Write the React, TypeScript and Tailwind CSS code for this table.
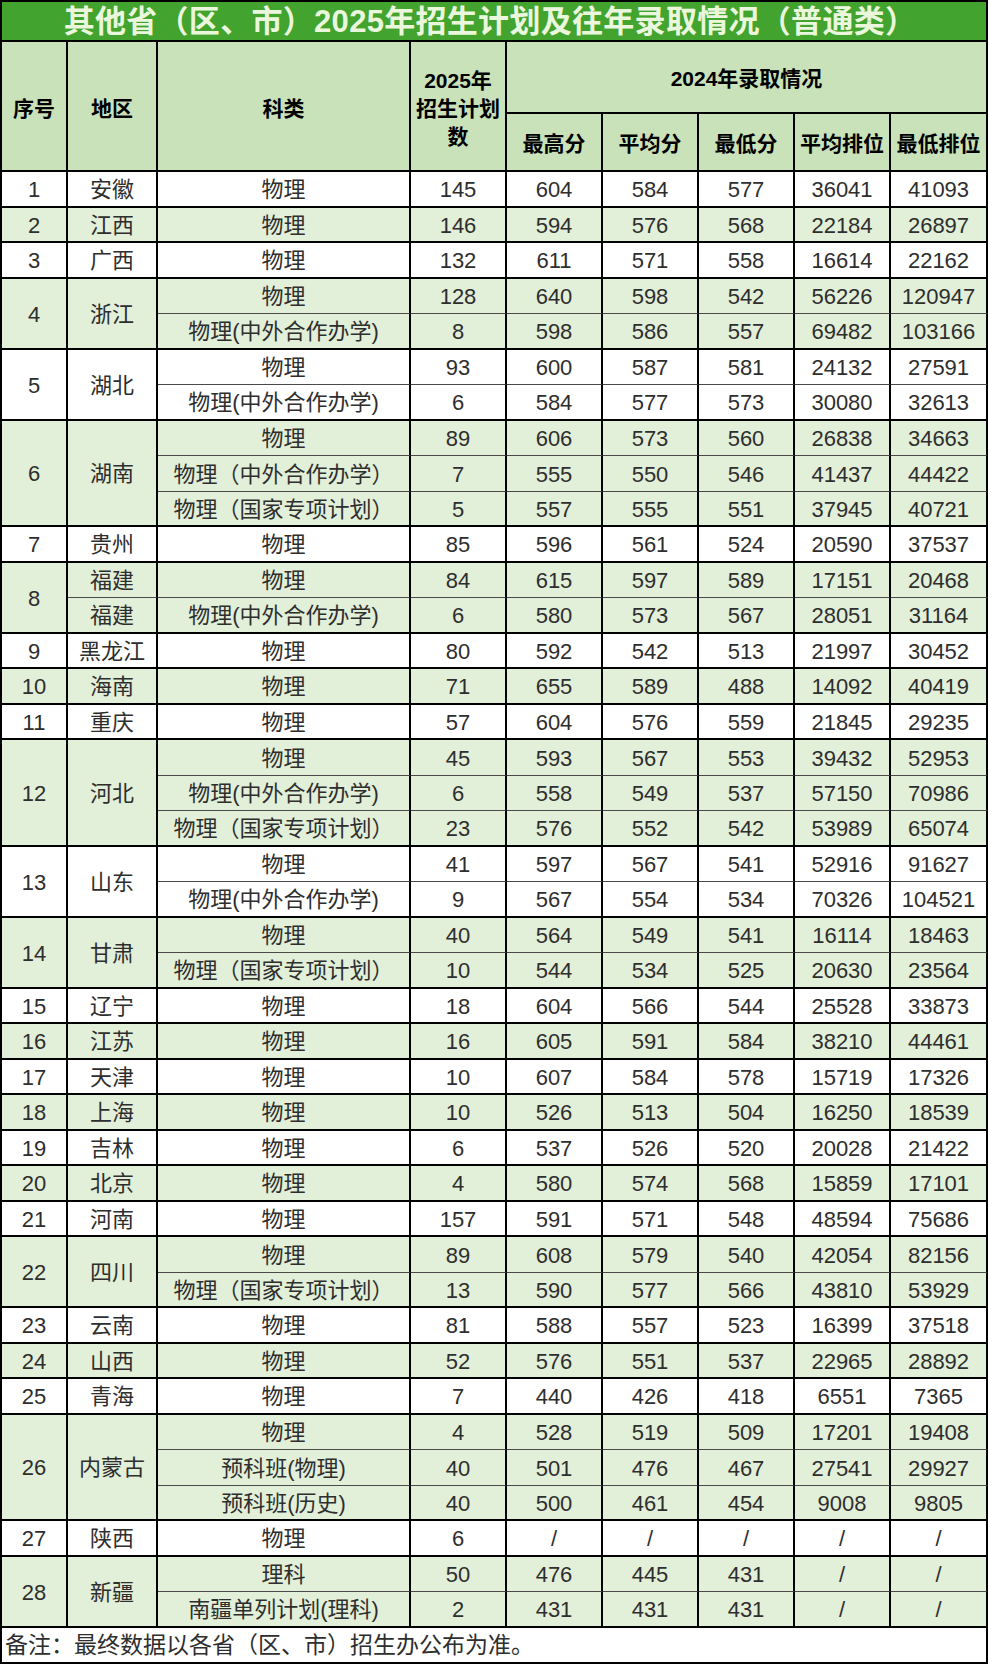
import React from "react";

type Row = [string, string, string, string, string, string, string];
type Group = { seq: string; region: string; splitRegion?: boolean; rows: Row[] };

const groups: Group[] = [
  { seq: "1", region: "安徽", rows: [["物理", "145", "604", "584", "577", "36041", "41093"]] },
  { seq: "2", region: "江西", rows: [["物理", "146", "594", "576", "568", "22184", "26897"]] },
  { seq: "3", region: "广西", rows: [["物理", "132", "611", "571", "558", "16614", "22162"]] },
  {
    seq: "4",
    region: "浙江",
    rows: [
      ["物理", "128", "640", "598", "542", "56226", "120947"],
      ["物理(中外合作办学)", "8", "598", "586", "557", "69482", "103166"],
    ],
  },
  {
    seq: "5",
    region: "湖北",
    rows: [
      ["物理", "93", "600", "587", "581", "24132", "27591"],
      ["物理(中外合作办学)", "6", "584", "577", "573", "30080", "32613"],
    ],
  },
  {
    seq: "6",
    region: "湖南",
    rows: [
      ["物理", "89", "606", "573", "560", "26838", "34663"],
      ["物理（中外合作办学）", "7", "555", "550", "546", "41437", "44422"],
      ["物理（国家专项计划）", "5", "557", "555", "551", "37945", "40721"],
    ],
  },
  { seq: "7", region: "贵州", rows: [["物理", "85", "596", "561", "524", "20590", "37537"]] },
  {
    seq: "8",
    region: "福建",
    splitRegion: true,
    rows: [
      ["物理", "84", "615", "597", "589", "17151", "20468"],
      ["物理(中外合作办学)", "6", "580", "573", "567", "28051", "31164"],
    ],
  },
  { seq: "9", region: "黑龙江", rows: [["物理", "80", "592", "542", "513", "21997", "30452"]] },
  { seq: "10", region: "海南", rows: [["物理", "71", "655", "589", "488", "14092", "40419"]] },
  { seq: "11", region: "重庆", rows: [["物理", "57", "604", "576", "559", "21845", "29235"]] },
  {
    seq: "12",
    region: "河北",
    rows: [
      ["物理", "45", "593", "567", "553", "39432", "52953"],
      ["物理(中外合作办学)", "6", "558", "549", "537", "57150", "70986"],
      ["物理（国家专项计划）", "23", "576", "552", "542", "53989", "65074"],
    ],
  },
  {
    seq: "13",
    region: "山东",
    rows: [
      ["物理", "41", "597", "567", "541", "52916", "91627"],
      ["物理(中外合作办学)", "9", "567", "554", "534", "70326", "104521"],
    ],
  },
  {
    seq: "14",
    region: "甘肃",
    rows: [
      ["物理", "40", "564", "549", "541", "16114", "18463"],
      ["物理（国家专项计划）", "10", "544", "534", "525", "20630", "23564"],
    ],
  },
  { seq: "15", region: "辽宁", rows: [["物理", "18", "604", "566", "544", "25528", "33873"]] },
  { seq: "16", region: "江苏", rows: [["物理", "16", "605", "591", "584", "38210", "44461"]] },
  { seq: "17", region: "天津", rows: [["物理", "10", "607", "584", "578", "15719", "17326"]] },
  { seq: "18", region: "上海", rows: [["物理", "10", "526", "513", "504", "16250", "18539"]] },
  { seq: "19", region: "吉林", rows: [["物理", "6", "537", "526", "520", "20028", "21422"]] },
  { seq: "20", region: "北京", rows: [["物理", "4", "580", "574", "568", "15859", "17101"]] },
  { seq: "21", region: "河南", rows: [["物理", "157", "591", "571", "548", "48594", "75686"]] },
  {
    seq: "22",
    region: "四川",
    rows: [
      ["物理", "89", "608", "579", "540", "42054", "82156"],
      ["物理（国家专项计划）", "13", "590", "577", "566", "43810", "53929"],
    ],
  },
  { seq: "23", region: "云南", rows: [["物理", "81", "588", "557", "523", "16399", "37518"]] },
  { seq: "24", region: "山西", rows: [["物理", "52", "576", "551", "537", "22965", "28892"]] },
  { seq: "25", region: "青海", rows: [["物理", "7", "440", "426", "418", "6551", "7365"]] },
  {
    seq: "26",
    region: "内蒙古",
    rows: [
      ["物理", "4", "528", "519", "509", "17201", "19408"],
      ["预科班(物理)", "40", "501", "476", "467", "27541", "29927"],
      ["预科班(历史)", "40", "500", "461", "454", "9008", "9805"],
    ],
  },
  { seq: "27", region: "陕西", rows: [["物理", "6", "/", "/", "/", "/", "/"]] },
  {
    seq: "28",
    region: "新疆",
    rows: [
      ["理科", "50", "476", "445", "431", "/", "/"],
      ["南疆单列计划(理科)", "2", "431", "431", "431", "/", "/"],
    ],
  },
];

const spanClass: Record<number, string> = { 1: "", 2: "row-span-2", 3: "row-span-3" };

function Cell({
  children,
  className = "",
}: {
  children?: React.ReactNode;
  className?: string;
}) {
  return (
    <div
      className={`flex items-center justify-center whitespace-nowrap border-r-2 border-r-black ${className}`}
    >
      {children}
    </div>
  );
}

const thick = "border-b-2 border-b-black";
const thin = "border-b border-b-[#4a4a4a]";

export default function App() {
  const cells: React.ReactNode[] = [];
  groups.forEach((g, gi) => {
    const bg = gi % 2 === 0 ? "bg-white" : "bg-[#e2efd9]";
    const n = g.rows.length;
    g.rows.forEach((r, ri) => {
      const last = ri === n - 1;
      const b = last ? thick : thin;
      if (ri === 0) {
        cells.push(
          <Cell key={`s${gi}`} className={`${spanClass[n]} ${bg} ${thick} pt-[3px]`}>
            {g.seq}
          </Cell>
        );
        if (!g.splitRegion) {
          cells.push(
            <Cell key={`r${gi}`} className={`${spanClass[n]} ${bg} ${thick} pt-[3px]`}>
              {g.region}
            </Cell>
          );
        }
      }
      if (g.splitRegion) {
        cells.push(
          <Cell key={`r${gi}-${ri}`} className={`${bg} ${b} pt-[3px]`}>
            {g.region}
          </Cell>
        );
      }
      r.forEach((v, ci) => {
        cells.push(
          <Cell key={`c${gi}-${ri}-${ci}`} className={`${bg} ${b} pt-[3px]`}>
            {v}
          </Cell>
        );
      });
    });
  });

  const cols =
    "grid grid-cols-[66px_90px_253px_96px_96px_96px_96px_96px_97px]";

  return (
    <div
      className="w-[988px] min-h-[1666px] bg-white text-[#2e2e2e]"
      style={{ fontFamily: '"Liberation Sans", "Noto Sans CJK SC", sans-serif' }}
    >
      <div className="w-[988px] border-l-2 border-t-2 border-black">
        {/* Title */}
        <div className="flex h-[40px] items-center justify-center border-r-2 border-b-2 border-black bg-[#42a32f] pr-[8px] pt-[1px]">
          <span className="text-[31px] font-bold leading-none tracking-[0.3px] text-[#eaf7dc]">
            其他省（区、市）2025年招生计划及往年录取情况（普通类）
          </span>
        </div>

        {/* Header */}
        <div
          className={`${cols} grid-rows-[72px_58px] bg-[#c9e2b9] text-[21px] font-bold text-black`}
        >
          <Cell className={`row-span-2 ${thick} pt-[6px]`}>序号</Cell>
          <Cell className={`row-span-2 ${thick} pt-[6px]`}>地区</Cell>
          <Cell className={`row-span-2 ${thick} pt-[6px]`}>科类</Cell>
          <Cell className={`row-span-2 ${thick} flex-col leading-[28px] pt-[6px]`}>
            <span>2025年</span>
            <span>招生计划</span>
            <span>数</span>
          </Cell>
          <Cell className={`col-span-5 ${thick} pt-[4px]`}>2024年录取情况</Cell>
          <Cell className={`${thick} pt-[4px]`}>最高分</Cell>
          <Cell className={`${thick} pt-[4px]`}>平均分</Cell>
          <Cell className={`${thick} pt-[4px]`}>最低分</Cell>
          <Cell className={`${thick} pt-[4px]`}>平均排位</Cell>
          <Cell className={`${thick} pt-[4px]`}>最低排位</Cell>
        </div>

        {/* Data */}
        <div className={`${cols} auto-rows-[35.5px] text-[22px] leading-none`}>
          {cells}
        </div>

        {/* Note */}
        <div className="flex h-[36px] items-center border-r-2 border-b-2 border-black pl-[3px] pt-[2px] text-[23px] leading-none">
          备注：最终数据以各省（区、市）招生办公布为准。
        </div>
      </div>
    </div>
  );
}
